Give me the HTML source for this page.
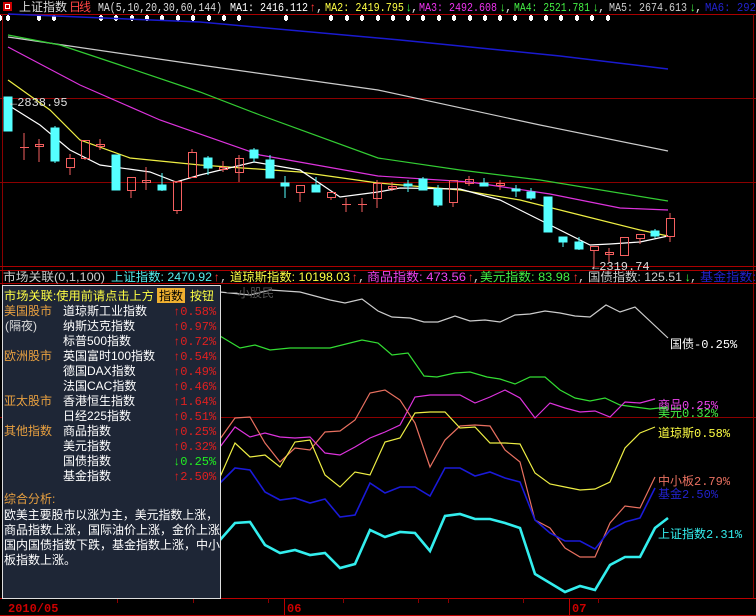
<!DOCTYPE html><html><head><meta charset="utf-8"><style>
html,body{margin:0;padding:0;background:#000;width:756px;height:616px;overflow:hidden}
svg{display:block}
text{font-family:"Liberation Mono","Noto Sans CJK SC",monospace;font-size:12px}
.c{font-family:"Liberation Sans","Noto Sans CJK SC",sans-serif}
</style></head><body>
<svg width="756" height="616" viewBox="0 0 756 616" xmlns="http://www.w3.org/2000/svg">
<rect width="756" height="616" fill="#000"/>
<g stroke="#8b0000" stroke-width="1" fill="none">
<line x1="0" y1="14.5" x2="756" y2="14.5" stroke="#a00"/>
<line x1="2.5" y1="14" x2="2.5" y2="598"/>
<line x1="753.5" y1="14" x2="753.5" y2="598"/>
<line x1="0" y1="98.5" x2="756" y2="98.5"/>
<line x1="0" y1="182.5" x2="756" y2="182.5"/>
<line x1="0" y1="266.5" x2="756" y2="266.5" stroke="#a00"/>
<line x1="0" y1="270.5" x2="756" y2="270.5" stroke="#a00"/>
<line x1="0" y1="283.5" x2="756" y2="283.5" stroke="#a00"/>
<line x1="0" y1="417.5" x2="756" y2="417.5"/>
<line x1="0" y1="598.5" x2="756" y2="598.5" stroke="#b00"/>
<line x1="0" y1="615.5" x2="756" y2="615.5" stroke="#b00"/>
<line x1="284.5" y1="598" x2="284.5" y2="616" stroke="#b00"/>
<line x1="569.5" y1="598" x2="569.5" y2="616" stroke="#b00"/>
<line x1="117.5" y1="598" x2="117.5" y2="603"/><line x1="193.5" y1="598" x2="193.5" y2="603"/>
<line x1="268.5" y1="598" x2="268.5" y2="603"/><line x1="343.5" y1="598" x2="343.5" y2="603"/>
<line x1="418.5" y1="598" x2="418.5" y2="603"/><line x1="448.5" y1="598" x2="448.5" y2="603"/>
<line x1="523.5" y1="598" x2="523.5" y2="603"/><line x1="598.5" y1="598" x2="598.5" y2="603"/>
</g>
<rect x="3" y="2" width="9" height="9" fill="#c00"/><rect x="5.5" y="4.5" width="4" height="4" fill="none" stroke="#fff" stroke-width="1"/>
<text x="19" y="11" fill="#ddd" class="c" textLength="48">上证指数</text>
<text x="69" y="11" fill="#f44" class="c" textLength="22">日线</text>
<text x="98" y="11" fill="#ddd" textLength="124" lengthAdjust="spacingAndGlyphs">MA(5,10,20,30,60,144)</text>
<text x="230" y="11" fill="#fff" textLength="78" lengthAdjust="spacingAndGlyphs">MA1: 2416.112</text><text x="309" y="11" fill="#f33">↑</text><text x="316" y="11" fill="#ddd">,</text>
<text x="325" y="11" fill="#ff4" textLength="79" lengthAdjust="spacingAndGlyphs">MA2: 2419.795</text><text x="405" y="11" fill="#4f4">↓</text><text x="411" y="11" fill="#ddd">,</text>
<text x="419" y="11" fill="#e3e" textLength="78" lengthAdjust="spacingAndGlyphs">MA3: 2492.608</text><text x="499" y="11" fill="#4f4">↓</text><text x="505" y="11" fill="#ddd">,</text>
<text x="514" y="11" fill="#4e4" textLength="76" lengthAdjust="spacingAndGlyphs">MA4: 2521.781</text><text x="592" y="11" fill="#4f4">↓</text><text x="598" y="11" fill="#ddd">,</text>
<text x="609" y="11" fill="#ccc" textLength="78" lengthAdjust="spacingAndGlyphs">MA5: 2674.613</text><text x="689" y="11" fill="#4f4">↓</text><text x="695" y="11" fill="#ddd">,</text>
<text x="705" y="11" fill="#22c" textLength="51" lengthAdjust="spacingAndGlyphs">MA6: 292</text>
<g fill="#fff">
<g id="d"><rect x="-1" y="15" width="2" height="6"/><rect x="-2" y="16" width="4" height="4"/></g>
<use href="#d" x="8"/><use href="#d" x="39"/><use href="#d" x="54"/><use href="#d" x="101"/><use href="#d" x="116"/><use href="#d" x="132"/><use href="#d" x="147"/><use href="#d" x="162"/><use href="#d" x="178"/><use href="#d" x="193"/><use href="#d" x="209"/><use href="#d" x="224"/><use href="#d" x="239"/><use href="#d" x="286"/><use href="#d" x="331"/><use href="#d" x="347"/><use href="#d" x="362"/><use href="#d" x="378"/><use href="#d" x="393"/><use href="#d" x="408"/><use href="#d" x="423"/><use href="#d" x="439"/><use href="#d" x="454"/><use href="#d" x="470"/><use href="#d" x="485"/><use href="#d" x="500"/><use href="#d" x="515"/><use href="#d" x="531"/><use href="#d" x="546"/><use href="#d" x="561"/><use href="#d" x="577"/><use href="#d" x="592"/><use href="#d" x="608"/>
</g>
<g fill="none" stroke-width="1.2">
<polyline stroke="#1a1ad0" stroke-width="1.5" points="8,14 200,22 400,40 560,56 668,69"/>
<polyline stroke="#ccc" points="8,37 200,65 378,90 540,125 668,151"/>
<polyline stroke="#3c3" points="8,35 60,45 120,65 200,92 260,115 378,158 460,170 540,180 668,201"/>
<polyline stroke="#d3d" points="8,47 80,85 160,120 260,155 378,176 470,182 550,194 620,208 668,210"/>
<polyline stroke="#ee4" points="8,80 50,110 80,140 130,158 200,165 300,172 378,183 460,190 520,200 580,215 640,230 668,236"/>
<polyline stroke="#fff" points="8,105 40,125 70,150 100,165 150,172 176,182 200,175 254,162 300,170 340,197 378,192 400,188 460,189 500,200 540,220 590,245 610,244 640,242 668,236"/>
</g>
<g stroke-width="1">
<g fill="#5ff" stroke="#5ff">
<rect x="4" y="97" width="8" height="34"/><rect x="51" y="128" width="8" height="33"/><line x1="55" y1="126" x2="55" y2="163"/>
<rect x="112" y="155" width="8" height="35"/><rect x="158" y="185" width="8" height="5"/><line x1="162" y1="173" x2="162" y2="191"/>
<rect x="204" y="158" width="8" height="10"/><line x1="208" y1="156" x2="208" y2="175"/>
<rect x="250" y="150" width="8" height="8"/><line x1="254" y1="148" x2="254" y2="162"/>
<rect x="266" y="160" width="8" height="18"/><line x1="270" y1="155" x2="270" y2="160"/>
<rect x="281" y="183" width="8" height="3"/><line x1="285" y1="176" x2="285" y2="198"/>
<rect x="312" y="185" width="8" height="7"/><line x1="316" y1="177" x2="316" y2="192"/>
<rect x="404" y="184" width="8" height="2"/><line x1="408" y1="180" x2="408" y2="192"/>
<rect x="419" y="179" width="8" height="11"/><line x1="423" y1="177" x2="423" y2="190"/>
<rect x="434" y="189" width="8" height="16"/><line x1="438" y1="185" x2="438" y2="207"/>
<rect x="480" y="183" width="8" height="3"/><line x1="484" y1="178" x2="484" y2="186"/>
<rect x="512" y="189" width="8" height="2"/><line x1="516" y1="185" x2="516" y2="197"/>
<rect x="527" y="192" width="8" height="6"/><line x1="531" y1="188" x2="531" y2="200"/>
<rect x="544" y="197" width="8" height="35"/>
<rect x="559" y="237" width="8" height="5"/><line x1="563" y1="242" x2="563" y2="247"/>
<rect x="575" y="242" width="8" height="7"/><line x1="579" y1="237" x2="579" y2="250"/>
<rect x="651" y="231" width="8" height="5"/><line x1="655" y1="229" x2="655" y2="238"/>
</g>
<g fill="none" stroke="#f56060">
<line x1="24" y1="133" x2="24" y2="160"/><line x1="20" y1="147.5" x2="29" y2="147.5"/>
<rect x="35.5" y="144.5" width="8" height="2"/><line x1="39" y1="139" x2="39" y2="162"/>
<rect x="66.5" y="158.5" width="8" height="9"/><line x1="70" y1="154" x2="70" y2="158"/><line x1="70" y1="168" x2="70" y2="175"/>
<rect x="81.5" y="140.5" width="8" height="18"/><line x1="85" y1="158" x2="85" y2="160"/>
<rect x="96.5" y="144.5" width="8" height="2"/><line x1="100" y1="139" x2="100" y2="150"/>
<rect x="127.5" y="177.5" width="8" height="13"/><line x1="131" y1="190" x2="131" y2="198"/>
<rect x="142.5" y="180.5" width="8" height="2"/><line x1="146" y1="167" x2="146" y2="190"/>
<rect x="173.5" y="181.5" width="8" height="29"/><line x1="177" y1="210" x2="177" y2="214"/>
<rect x="188.5" y="152.5" width="8" height="25"/><line x1="192" y1="149" x2="192" y2="152"/>
<rect x="219.5" y="167.5" width="8" height="2"/><line x1="223" y1="161" x2="223" y2="172"/>
<rect x="235.5" y="158.5" width="8" height="14"/><line x1="239" y1="155" x2="239" y2="182"/>
<rect x="296.5" y="185.5" width="8" height="7"/><line x1="300" y1="192" x2="300" y2="202"/>
<rect x="327.5" y="192.5" width="8" height="5"/><line x1="331" y1="198" x2="331" y2="200"/>
<line x1="346" y1="198" x2="346" y2="212"/><line x1="342" y1="204.5" x2="351" y2="204.5"/>
<line x1="362" y1="198" x2="362" y2="212"/><line x1="358" y1="204.5" x2="367" y2="204.5"/>
<rect x="373.5" y="183.5" width="8" height="15"/><line x1="377" y1="180" x2="377" y2="208"/>
<rect x="388.5" y="186.5" width="8" height="2"/><line x1="392" y1="182" x2="392" y2="191"/>
<rect x="449.5" y="180.5" width="8" height="22"/><line x1="453" y1="202" x2="453" y2="207"/>
<rect x="465.5" y="179.5" width="8" height="4"/><line x1="469" y1="176" x2="469" y2="186"/>
<rect x="496.5" y="183.5" width="8" height="2"/><line x1="500" y1="180" x2="500" y2="190"/>
<rect x="590.5" y="246.5" width="8" height="4"/><line x1="594" y1="250" x2="594" y2="268"/>
<rect x="605.5" y="252.5" width="8" height="2"/><line x1="609" y1="248" x2="609" y2="262"/>
<rect x="620.5" y="237.5" width="8" height="18"/>
<rect x="636.5" y="234.5" width="8" height="4"/><line x1="640" y1="238" x2="640" y2="244"/>
<rect x="666.5" y="218.5" width="8" height="18"/><line x1="670" y1="213" x2="670" y2="218"/><line x1="670" y1="236" x2="670" y2="242"/>
</g>
</g>
<text x="10" y="106" fill="#ddd" font-size="11">←2838.95</text>
<text x="592" y="270" fill="#ddd" font-size="11">←2319.74</text>
<text x="3" y="281" fill="#ccc" class="c" textLength="102" lengthAdjust="spacingAndGlyphs">市场关联(0,1,100)</text>
<text x="111" y="281" fill="#5ee" class="c" textLength="101" lengthAdjust="spacingAndGlyphs">上证指数: 2470.92</text><text x="213" y="281" fill="#f33">↑</text><text x="220" y="281" fill="#ccc">,</text>
<text x="230" y="281" fill="#ff4" class="c" textLength="120" lengthAdjust="spacingAndGlyphs">道琼斯指数: 10198.03</text><text x="351" y="281" fill="#f33">↑</text><text x="358" y="281" fill="#ccc">,</text>
<text x="367" y="281" fill="#e4e" class="c" textLength="99" lengthAdjust="spacingAndGlyphs">商品指数: 473.56</text><text x="467" y="281" fill="#f33">↑</text><text x="473" y="281" fill="#ccc">,</text>
<text x="480" y="281" fill="#4e4" class="c" textLength="90" lengthAdjust="spacingAndGlyphs">美元指数: 83.98</text><text x="572" y="281" fill="#f33">↑</text><text x="578" y="281" fill="#ccc">,</text>
<text x="588" y="281" fill="#ccc" class="c" textLength="94" lengthAdjust="spacingAndGlyphs">国债指数: 125.51</text><text x="684" y="281" fill="#4f4">↓</text><text x="690" y="281" fill="#ccc">,</text>
<text x="700" y="281" fill="#22c" class="c" textLength="56" lengthAdjust="spacingAndGlyphs">基金指数:</text>
<g fill="none" stroke-width="1.2">
<polyline stroke="#ccc" points="220,292 250,295 270,290 300,292 330,300 345,303 362,299 378,311 392,317 410,318 424,322 438,322 455,316 470,321 485,320 500,322 515,315 530,314 545,311 560,313 575,316 590,317 606,305 620,312 635,307 668,338"/>
<polyline stroke="#3d3" points="220,336 240,348 255,345 270,350 290,348 330,348 362,340 378,343 392,355 408,353 424,376 437,377 455,373 470,372 487,377 500,379 515,384 530,377 545,377 560,390 575,398 590,401 605,398 620,405 635,407 650,409 668,407"/>
<polyline stroke="#d3d" points="220,447 235,427 250,437 265,433 280,437 295,438 310,437 325,453 340,455 355,447 370,438 385,432 400,425 415,397 430,395 445,395 460,395 475,403 490,397 505,390 520,398 535,418 550,403 565,408 580,412 595,411 610,417 625,402 640,403 655,399"/>
<polyline stroke="#e87060" points="220,439 235,418 250,417 265,443 280,462 295,448 310,450 325,432 340,431 355,420 370,393 385,390 400,400 415,423 430,467 445,440 460,426 475,425 490,426 505,450 520,462 535,520 550,528 565,548 580,557 595,557 610,523 625,506 640,508 655,477"/>
<polyline stroke="#ee4" points="220,477 235,443 250,457 265,455 280,467 295,442 310,440 325,475 340,487 355,472 370,475 385,442 400,438 415,413 430,412 445,412 460,428 475,427 490,443 505,443 520,444 535,473 550,484 565,487 580,490 595,489 610,482 625,448 640,433 655,427"/>
<polyline stroke="#1a1ad8" stroke-width="1.6" points="220,483 235,468 250,470 265,492 280,500 295,498 310,503 325,499 340,517 355,515 370,483 385,493 400,487 415,487 430,496 445,468 460,468 475,476 490,472 505,478 520,482 535,520 550,533 565,541 580,541 595,549 610,530 625,522 640,518 655,488"/>
<polyline stroke="#3ee" stroke-width="2.6" points="220,540 235,523 250,522 265,545 280,553 295,550 310,555 325,553 340,568 355,564 370,530 385,537 400,532 415,533 430,551 445,516 460,514 475,519 490,519 505,523 520,528 535,574 550,583 565,592 580,586 595,590 610,565 625,557 640,557 655,528 668,518"/>
</g>
<g font-size="11">
<text x="670" y="348" fill="#fff" class="c">国债<tspan font-family="Liberation Mono">-0.25%</tspan></text>
<text x="658" y="409" fill="#e4e" class="c">商品<tspan font-family="Liberation Mono">0.25%</tspan></text>
<text x="658" y="417" fill="#4e4" class="c">美元<tspan font-family="Liberation Mono">0.32%</tspan></text>
<text x="658" y="437" fill="#ff4" class="c">道琼斯<tspan font-family="Liberation Mono">0.58%</tspan></text>
<text x="658" y="485" fill="#e87060" class="c">中小板<tspan font-family="Liberation Mono">2.79%</tspan></text>
<text x="658" y="498" fill="#22c" class="c">基金<tspan font-family="Liberation Mono">2.50%</tspan></text>
<text x="658" y="538" fill="#3ee" class="c">上证指数<tspan font-family="Liberation Mono">2.31%</tspan></text>
</g>
<text x="226" y="297" fill="#555" class="c" font-size="12">一小股民</text>
<rect x="2.5" y="285.5" width="218" height="313" fill="#1e2636" stroke="#ddd"/>
<g class="c" font-size="12">
<text x="4" y="300" fill="#ff4" class="c" textLength="150" lengthAdjust="spacingAndGlyphs">市场关联:使用前请点击上方</text>
<rect x="157" y="288" width="28" height="15" fill="#f0b030"/>
<text x="159" y="300" fill="#000" class="c">指数</text>
<text x="190" y="300" fill="#ff4" class="c">按钮</text>
</g>
<g font-size="12">
<text x="4" y="315" fill="#e8a040" class="c">美国股市</text>
<text x="5" y="330" fill="#ddd" class="c">(隔夜)</text>
<text x="4" y="360" fill="#e8a040" class="c">欧洲股市</text>
<text x="4" y="405" fill="#e8a040" class="c">亚太股市</text>
<text x="4" y="435" fill="#e8a040" class="c">其他指数</text>
<g fill="#fff">
<text x="63" y="315" class="c">道琼斯工业指数</text>
<text x="63" y="330" class="c">纳斯达克指数</text>
<text x="63" y="345" class="c">标普500指数</text>
<text x="63" y="360" class="c">英国富时100指数</text>
<text x="63" y="375" class="c">德国DAX指数</text>
<text x="63" y="390" class="c">法国CAC指数</text>
<text x="63" y="405" class="c">香港恒生指数</text>
<text x="63" y="420" class="c">日经225指数</text>
<text x="63" y="435" class="c">商品指数</text>
<text x="63" y="450" class="c">美元指数</text>
<text x="63" y="465" class="c">国债指数</text>
<text x="63" y="480" class="c">基金指数</text>
</g>
<g fill="#e02020" font-size="11">
<text x="173" y="315">↑0.58%</text><text x="173" y="330">↑0.97%</text><text x="173" y="345">↑0.72%</text>
<text x="173" y="360">↑0.54%</text><text x="173" y="375">↑0.49%</text><text x="173" y="390">↑0.46%</text>
<text x="173" y="405">↑1.64%</text><text x="173" y="420">↑0.51%</text><text x="173" y="435">↑0.25%</text>
<text x="173" y="450">↑0.32%</text><text x="173" y="465" fill="#2e2">↓0.25%</text><text x="173" y="480">↑2.50%</text>
</g>
<text x="4" y="503" fill="#e8a040" class="c">综合分析:</text>
<g fill="#fff">
<text x="4" y="519" class="c" textLength="214" lengthAdjust="spacingAndGlyphs">欧美主要股市以涨为主，美元指数上涨，</text>
<text x="4" y="534" class="c" textLength="216" lengthAdjust="spacingAndGlyphs">商品指数上涨，国际油价上涨，金价上涨</text>
<text x="4" y="549" class="c" textLength="216" lengthAdjust="spacingAndGlyphs">国内国债指数下跌，基金指数上涨，中小</text>
<text x="4" y="564" class="c">板指数上涨。</text>
</g>
</g>
<text x="8" y="612" fill="#c00" font-weight="bold" font-size="13">2010/05</text>
<text x="287" y="612" fill="#c00" font-weight="bold" font-size="13">06</text>
<text x="572" y="612" fill="#c00" font-weight="bold" font-size="13">07</text>
</svg>
</body></html>
